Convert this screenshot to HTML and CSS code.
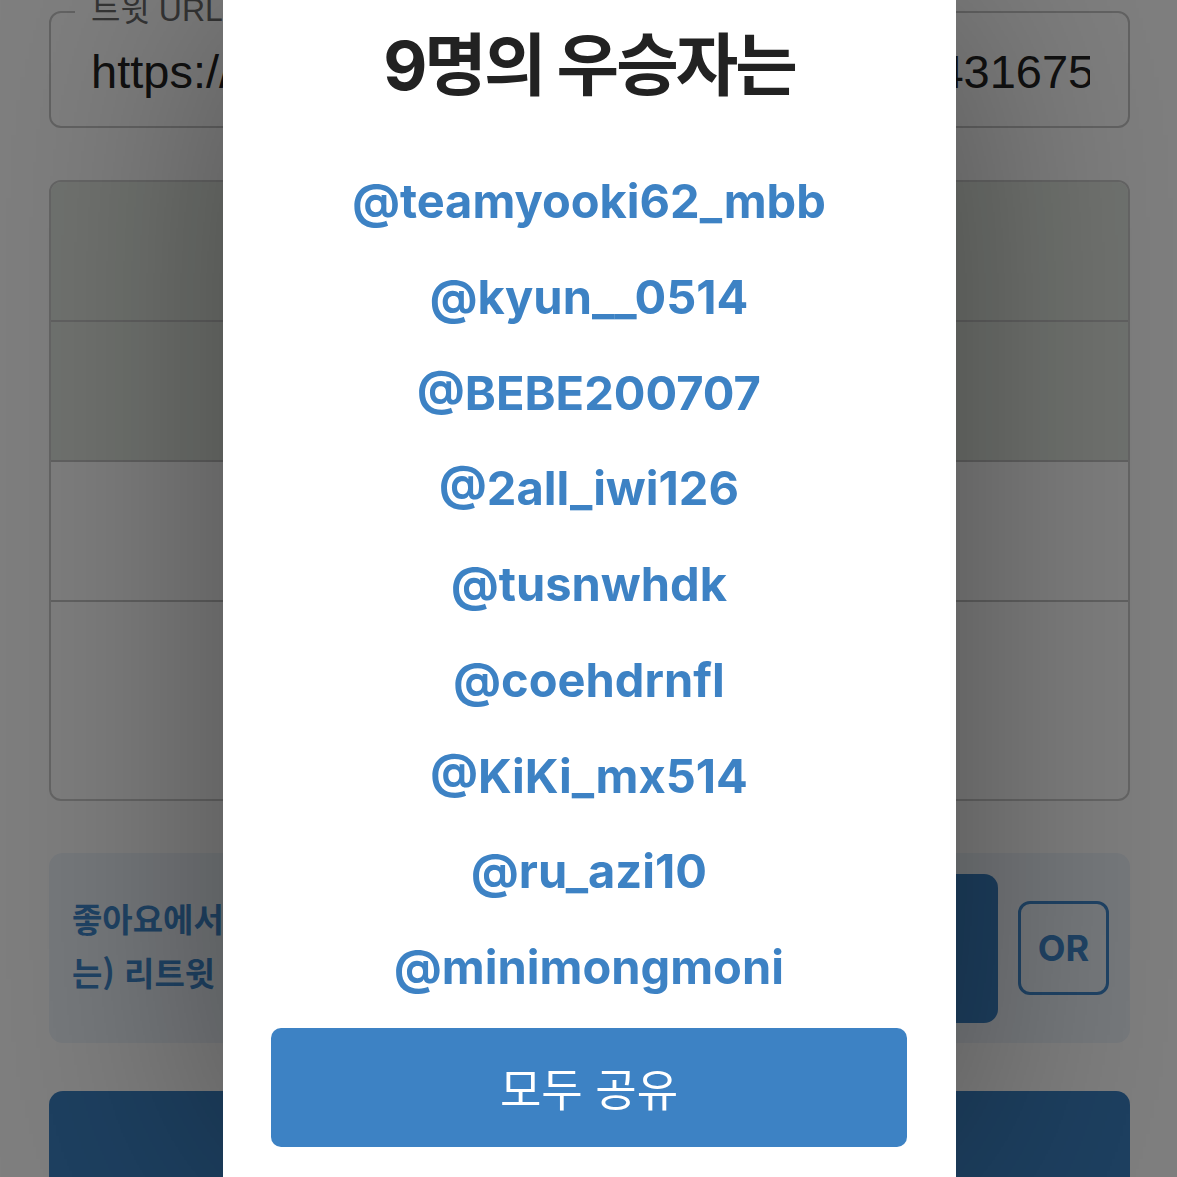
FILE: index.html
```html
<!DOCTYPE html>
<html lang="ko">
<head>
<meta charset="utf-8">
<title>추첨 결과</title>
<link rel="stylesheet" href="styles.css">
</head>
<body>
<main class="page">
  <div class="field">
    <span class="field-label">트윗 URL</span>
    <div class="field-input">https://twitter.com/eventsky/status/152934316750231</div>
  </div>
  <div class="list">
    <div class="row row-hl"></div>
    <div class="row row-hl"></div>
    <div class="row"></div>
    <div class="row row-last"></div>
  </div>
  <div class="info">
    <p class="info-text">좋아요에서 추첨 (또<br>는) 리트윗 추첨</p>
    <button class="draw-btn">추첨하기<br>시작</button>
    <div class="or-box">OR</div>
  </div>
  <button class="main-btn">추첨 시작</button>
</main>
<div class="backdrop"></div>
<section class="modal">
  <h2 class="modal-title">9명의 우승자는</h2>
  <ul class="winners">
    <li>@teamyooki62_mbb</li>
    <li>@kyun__0514</li>
    <li>@BEBE200707</li>
    <li>@2all_iwi126</li>
    <li>@tusnwhdk</li>
    <li>@coehdrnfl</li>
    <li>@KiKi_mx514</li>
    <li>@ru_azi10</li>
    <li>@minimongmoni</li>
  </ul>
  <button class="share-btn">모두 공유</button>
</section>
</body>
</html>
```
FILE: styles.css
```css
html, body {
  margin: 0;
  height: 100%;
}
body {
  background: #ffffff;
  font-family: "Liberation Sans", "Noto Sans CJK KR", sans-serif;
  overflow: hidden;
}
.page {
  padding: 11px 47px 0 49px;
  display: flex;
  flex-direction: column;
}
.field {
  position: relative;
  height: 117px;
  box-sizing: border-box;
  border: 2px solid #c6c6c6;
  border-radius: 12px;
  display: flex;
  align-items: center;
  padding: 0 38px 0 40px;
}
.field-label {
  position: absolute;
  left: 24px;
  top: -19px;
  padding: 0 8px 0 16px;
  background: #ffffff;
  font-size: 32px;
  line-height: 32px;
  color: #6a6a6a;
}
.field-input {
  font-size: 47px;
  color: #222222;
  white-space: nowrap;
  overflow: hidden;
  padding-top: 4px;
}
.list {
  margin-top: 52px;
  height: 621px;
  box-sizing: border-box;
  border: 2px solid #cccccc;
  border-radius: 12px;
  display: flex;
  flex-direction: column;
  overflow: hidden;
}
.row {
  height: 138px;
  border-bottom: 2px solid #c4c4c4;
}
.row-hl {
  background: #e1e6df;
}
.row-last {
  flex: 1;
  border-bottom: none;
}
.info {
  margin-top: 52px;
  height: 190px;
  box-sizing: border-box;
  background: #eef4fb;
  border-radius: 14px;
  display: flex;
  align-items: center;
  gap: 20px;
  padding: 0 21px 0 23px;
}
.info-text {
  flex: 1;
  margin: 0 0 6px;
  font-family: "Noto Sans CJK KR", sans-serif;
  font-weight: 700;
  font-size: 33px;
  line-height: 54px;
  color: #4088cc;
}
.draw-btn {
  flex-shrink: 0;
  width: 230px;
  height: 149px;
  border: none;
  border-radius: 14px;
  background: #3b80c2;
  color: #ffffff;
  font-family: "Noto Sans CJK KR", sans-serif;
  font-weight: 700;
  font-size: 40px;
  line-height: 58px;
  padding: 0 0 0 6px;
}
.or-box {
  flex-shrink: 0;
  width: 91px;
  height: 94px;
  box-sizing: border-box;
  border: 3px solid #4088cc;
  border-radius: 12px;
  display: flex;
  align-items: center;
  justify-content: center;
  font-family: Inter, sans-serif;
  font-weight: 700;
  font-size: 36px;
  color: #4088cc;
}
.main-btn {
  margin-top: 48px;
  height: 120px;
  border: none;
  border-radius: 14px;
  background: #3b80c2;
  color: #ffffff;
  font-family: "Noto Sans CJK KR", sans-serif;
  font-size: 40px;
}
.backdrop {
  position: fixed;
  inset: 0;
  background: rgba(0, 0, 0, 0.5);
}
.modal {
  position: fixed;
  top: 0;
  bottom: 0;
  left: 223px;
  width: 733px;
  box-sizing: border-box;
  padding: 0 49px 0 48px;
  background: #ffffff;
  box-shadow: 0 0 240px rgba(0, 0, 0, 0.4);
  display: flex;
  flex-direction: column;
}
.modal-title {
  margin: 0;
  height: 130px;
  line-height: 130px;
  text-align: center;
  font-family: Inter, "Noto Sans CJK KR", sans-serif;
  font-weight: 700;
  font-size: 68px;
  letter-spacing: -3px;
  color: #222222;
}
.winners {
  list-style: none;
  margin: 23px 0 0;
  padding: 0;
}
.winners li {
  height: 95.75px;
  line-height: 95.75px;
  text-align: center;
  font-family: Inter, sans-serif;
  font-weight: 700;
  font-size: 47px;
  color: #3d82c4;
}
.share-btn {
  margin-top: 13px;
  height: 119px;
  border: none;
  border-radius: 10px;
  background: #3d82c4;
  color: #ffffff;
  font-family: "Noto Sans CJK KR", sans-serif;
  font-weight: 400;
  font-size: 45px;
}
```
